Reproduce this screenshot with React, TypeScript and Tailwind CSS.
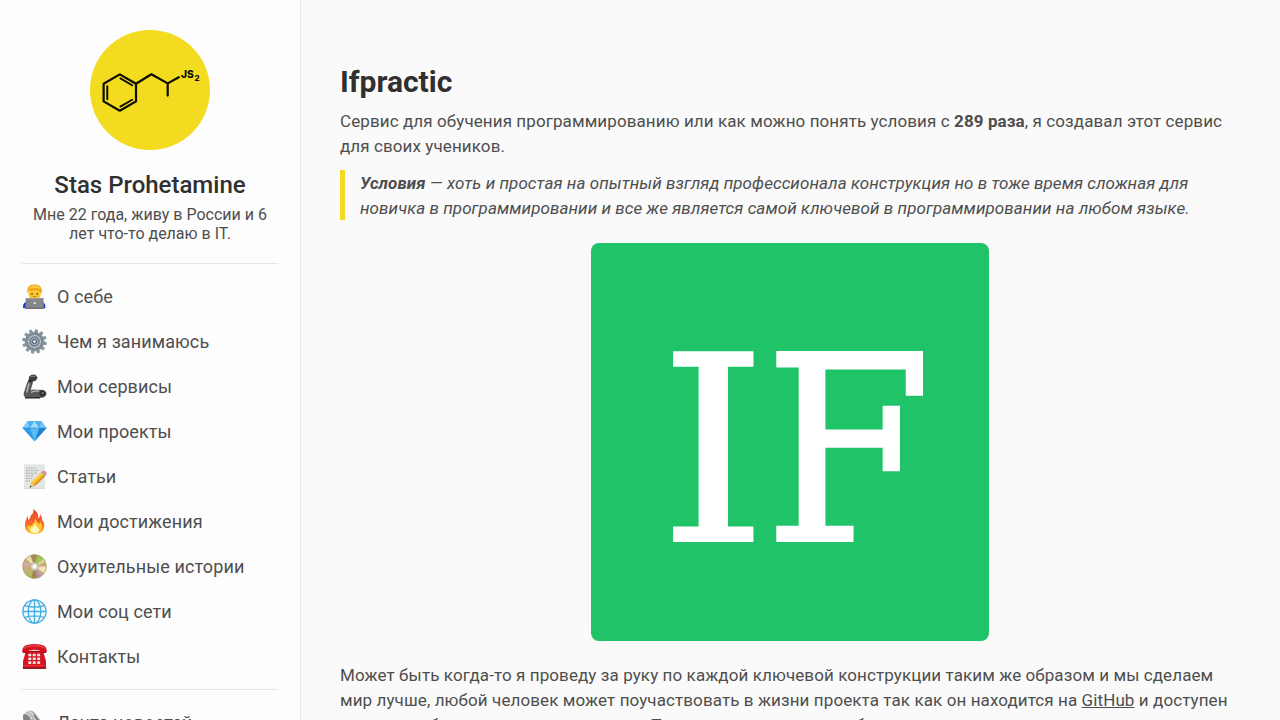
import type { ReactNode } from "react";

function Avatar() {
  return (
    <svg viewBox="0 0 120 120" className="h-[120px] w-[120px] shrink-0">
      <circle cx="60" cy="60" r="60" fill="#f3dc1f" />
      <g fill="none" stroke="#0c0b02" strokeWidth="2.2" strokeLinecap="round" strokeLinejoin="round">
        <path d="M29.8 44.4 46 53.8V71.4L29.8 80.7 13.6 71.4V53.8Z" />
        <path d="M17.3 56.2V69.2M30.4 48.4 42.2 55.2M30.4 76.6 42.2 69.8" strokeWidth="1.9" />
        <path d="M46 53.8 61.4 44.3 77.7 53.4 88.8 47.2M77.7 53.4V65.6" />
      </g>
      <text x="91" y="48.2" fontSize="10.2" fontWeight="800" fill="#0c0b02" className="font-['Inter',sans-serif]">JS</text>
      <text x="104.5" y="51.2" fontSize="8" fontWeight="800" fill="#0c0b02" className="font-['Inter',sans-serif]">2</text>
    </svg>
  );
}

function Icon({ children }: { children: ReactNode }) {
  return (
    <svg viewBox="0 0 25 25" className="h-[25px] w-[25px] shrink-0">
      {children}
    </svg>
  );
}

function Technologist() {
  return (
    <Icon>
      <path d="M1 24V21.5Q1.500 18.500 5 17.500H19Q23 18.500 23.300 21.500V24Z" fill="#2637d8" />
      <ellipse cx="12.600" cy="9.500" rx="6.300" ry="7" fill="#fbc72e" />
      <path d="M5.600 9.500Q4 1 11.500.6 20-.4 19.900 8L18.900 9.500Q17.500 6.200 15 6 10 7.500 7 6Z" fill="#eda61c" />
      <path d="M6.500 5Q9 .8 13 1.500 17 1.500 18.800 5.500 15 2.800 6.500 5Z" fill="#ffcd45" />
      <circle cx="10" cy="9.800" r=".9" fill="#6b4410" />
      <circle cx="15.200" cy="9.800" r=".9" fill="#6b4410" />
      <path d="M10.800 12.600H14.400" stroke="#a86a12" strokeWidth=".8" />
      <rect x="3.600" y="14" width="18" height="10.500" rx=".8" fill="#85888b" />
      <path d="M4 14.400H21.300" stroke="#a5a8aa" strokeWidth=".7" />
      <path d="M3 24.300H22.300" stroke="#5b5e61" />
      <circle cx="12.700" cy="19.200" r="1.100" fill="#eceeef" />
    </Icon>
  );
}

const teeth = [0, 30, 60, 90, 120, 150, 180, 210, 240, 270, 300, 330];

function Gear() {
  return (
    <Icon>
      {teeth.map((a) => (
        <path key={a} d="M10.500 4 11 .2H13.900L14.500 4Z" fill="#8a979f" transform={`rotate(${a + 10} 12.500 12.500)`} />
      ))}
      <circle cx="12.500" cy="12.500" r="9.600" fill="#82909a" />
      <circle cx="12.500" cy="12.500" r="7.300" fill="#a6b6c3" stroke="#66747f" strokeWidth=".8" />
      <path d="M12.500 5.500V19.500M5.500 12.500H19.500" stroke="#c4d0d9" />
      <circle cx="12.500" cy="12.500" r="4.600" fill="#98a4af" stroke="#5d6973" />
      <circle cx="12.500" cy="12.500" r="2" fill="#e4eaee" stroke="#424c55" />
    </Icon>
  );
}

function MechanicalArm() {
  return (
    <Icon>
      <path d="M7.200 2.500Q10-.4 13.600 1L15.600 3.800 14 6.500 10.500 7.700 6.500 7Z" fill="#3c3e40" />
      <path d="M9 2.700Q11 1 13 3" stroke="#8e9193" fill="none" />
      <path d="M5.300 8 11 8.500 8.200 17.500 11 23.500H4Q1 22.500 1.800 19Z" fill="#55585a" />
      <path d="M7 9.500 4.500 19.500" stroke="#b6b8ba" strokeWidth="1.500" />
      <path d="M6 7 10.500 8" stroke="#1d1f20" strokeWidth="1.600" />
      <path d="M3 20Q8 14.500 15 15.800H21Q25 17.500 24.500 20.500 22.500 24.500 17 24H3.500Z" fill="#595c5e" />
      <path d="M9 18.500Q13 16 17 17.300" stroke="#b6b8b9" strokeWidth="1.400" fill="none" />
      <path d="M3 23.800H18" stroke="#26282a" strokeWidth="1.400" />
      <circle cx="20.300" cy="19.600" r="3" fill="#2c2e30" />
      <circle cx="20.600" cy="19.200" r="1.100" fill="#77797b" />
    </Icon>
  );
}

function Gem() {
  return (
    <Icon>
      <path d="M5.500 2.300H19.500L24.500 9 12.600 22.300.6 9Z" fill="#38a4ed" />
      <path d="M5.500 2.300 7.800 9H.6Z" fill="#83cdf8" />
      <path d="M5.500 2.300H12.500L7.800 9Z" fill="#4bb4f2" />
      <path d="M12.500 2.300 17.500 9H7.800Z" fill="#a5defc" />
      <path d="M12.500 2.300H19.500L17.500 9Z" fill="#4db2f2" />
      <path d="M19.500 2.300 24.500 9H17.500Z" fill="#78c7f7" />
      <path d="M7.800 9H17.500L12.600 22.300Z" fill="#57bdf7" />
      <path d="M.6 9H7.800L12.600 22.300Z" fill="#319ce6" />
      <path d="M17.500 9H24.500L12.600 22.300Z" fill="#1e83d4" />
      <path d="M.6 9H24.500" stroke="#2788d0" strokeWidth=".6" />
    </Icon>
  );
}

function Memo() {
  return (
    <Icon>
      <rect x="2" y=".3" width="21" height="24.400" fill="#e4e5e5" />
      <path d="M2 24.400H23" stroke="#c6c7c7" strokeWidth=".6" />
      <g stroke="#999b9c" strokeWidth=".8" strokeDasharray="2.200 .7 1.200 .6">
        <path d="M4 4H14M4 6.600H17M4 9.200H15M4 11.800H12M4 14.400H10M4 17H8" />
      </g>
      <path d="M9.300 18 20 7.500 23.800 11.200 13 21.800 7.800 23.500Z" fill="#f4b925" />
      <path d="M10.400 18.500 20.700 8.500" stroke="#ffdc62" strokeWidth="1.300" />
      <path d="M12.700 21.300 23 11.200" stroke="#cf8511" strokeWidth="1.200" />
      <path d="M9.300 18 13 21.800 7.800 23.500Z" fill="#e7c38d" />
      <path d="M8.500 21.600 9.700 22.900 7.600 23.600Z" fill="#343434" />
      <path d="M18.700 8.800 20 7.500 23.900 11.200 22.500 12.500Z" fill="#a9b0b3" />
      <path d="M20 7.500 21 6.700Q23.500 6.300 24.800 9 24.800 10.500 23.900 11.300Z" fill="#ee8790" />
    </Icon>
  );
}

function Fire() {
  return (
    <Icon>
      <defs>
        <linearGradient id="flame" x1="0" x2="0" y1="0" y2="1">
          <stop offset="0" stopColor="#ed4927" />
          <stop offset=".55" stopColor="#f6652b" />
          <stop offset="1" stopColor="#ffb22d" />
        </linearGradient>
      </defs>
      <path d="M11.200.1Q16.600 3 16.300 9.200 18.300 8.500 18 5 20.500 8 20.300 11.300 22.800 14 22.300 17.500 21.200 24.900 12.700 24.900 4 24.900 2.900 17.500 2.300 13 4.400 10.200L5.300 6.800Q6.300 9.200 6.100 11.200 8.500 9.800 8.700 6.500 12.200 4.500 11.200.1Z" fill="url(#flame)" />
      <path d="M13.300 9.800Q14.700 13.300 17.300 15 18.300 14.300 18.500 12.800 21 17.300 19 20.600 17.500 24.500 12.500 24.500 7.200 24.500 5.800 20.600 5 18 6.500 16 7.300 18 8.700 17 12.700 14.500 13.300 9.800Z" fill="#ffc72e" />
      <path d="M13 14.500Q13.500 17.500 16.300 18.700 18 21.500 15.800 23.500 12.500 25.300 9.300 23.300 7.200 20.500 9.500 18.500 12.500 17.500 13 14.500Z" fill="#fff7b8" />
    </Icon>
  );
}

function Disc() {
  return (
    <Icon>
      <circle cx="12.500" cy="12.500" r="12" fill="#c3ae77" />
      <path d="M12.500 12.500 3.500 4.500A12 12 0 0 1 8 1.400Z" fill="#e8dfb3" />
      <path d="M12.500 12.500 9 1A12 12 0 0 1 15.500 .9Z" fill="#a88b55" />
      <path d="M12.500 12.500 16 1A12 12 0 0 1 21.500 4.700Z" fill="#9cc94f" />
      <path d="M12.500 12.500 21.500 4.700A12 12 0 0 1 23.500 8Z" fill="#dcd29a" />
      <path d="M12.500 12.500 24.500 12.500A12 12 0 0 1 22.500 19.200Z" fill="#f0e3bd" />
      <path d="M12.500 12.500 19.500 22.200A12 12 0 0 1 15.500 24.100Z" fill="#b98bc2" />
      <path d="M12.500 12.500 15.500 24.100A12 12 0 0 1 9 24Z" fill="#a38750" />
      <path d="M12.500 12.500 8 23.600A12 12 0 0 1 3.800 20.600Z" fill="#b6bb5f" />
      <path d="M12.500 12.500 .5 12.500A12 12 0 0 1 1.700 7.500Z" fill="#d0a9a8" />
      <circle cx="12.500" cy="12.500" r="11.700" fill="none" stroke="#a89972" strokeWidth=".6" />
      <circle cx="12.500" cy="12.500" r="3.900" fill="#d9d4c4" stroke="#aca181" strokeWidth=".6" />
      <circle cx="12.500" cy="12.500" r="1.900" fill="#fff" />
    </Icon>
  );
}

function Globe() {
  return (
    <Icon>
      <circle cx="12.500" cy="12.500" r="11.600" fill="#eef9fe" />
      <g fill="none" stroke="#45ade0" strokeWidth="1.300">
        <circle cx="12.500" cy="12.500" r="11.600" />
        <ellipse cx="12.500" cy="12.500" rx="6.300" ry="11.600" />
        <path d="M12.500 1V24M1 12.500H24M3 6.700Q12.500 9.700 22 6.700M3 18.300Q12.500 15.300 22 18.300" />
      </g>
    </Icon>
  );
}

const keyRows = [10.2, 14, 17.8];
const keyCols = [6.7, 11.1, 15.5];

function Telephone() {
  return (
    <Icon>
      <path d="M4 7H21L24 17V24.500H1V17Z" fill="#d6141f" />
      <path d="M.2 7.500Q.2 2 5 1 12.500-.8 20 1 24.900 2 24.800 7.500 24.600 8.900 22.800 8.900H19Q18 8.500 18 6.500 12.500 5 7 6.500 7 8.500 6 8.900H2Q.4 8.900.2 7.500Z" fill="#d51320" />
      <path d="M2 4.500Q5 1.700 12.500 1.800 20 1.700 23 4.500" fill="none" stroke="#f35d5d" strokeWidth=".9" />
      <path d="M1 8.400H6M19 8.400H24M7 7.300H18" stroke="#8d0d15" strokeWidth=".9" />
      <path d="M1.500 21.700H23.500" stroke="#ef4a4c" strokeWidth=".7" />
      <path d="M.8 24.200H24.200" stroke="#7e0c13" strokeWidth="1.300" />
      {keyRows.map((y) =>
        keyCols.map((x) => <rect key={`${x}-${y}`} x={x - 0.4} y={y - 0.5} width="3" height="2.600" rx=".4" fill="#f4e5e3" />),
      )}
    </Icon>
  );
}

function Newspaper() {
  return (
    <Icon>
      <path d="M1 5 5 1Q10-.5 13 3L24 17 16 24 9 20 1 9Z" fill="#b1b0ad" />
      <path d="M1 5Q6 3 8 9L15 23 9 20 1 9Z" fill="#858481" />
      <path d="M5 1Q10 2 12 7L18 18M3 3Q8 4 10 9" stroke="#e1e0dd" strokeWidth="1.200" fill="none" />
      <path d="M12 5 17 12" stroke="#72716e" strokeWidth="1.500" />
    </Icon>
  );
}

const menu = [
  { label: "О себе", icon: <Technologist /> },
  { label: "Чем я занимаюсь", icon: <Gear /> },
  { label: "Мои сервисы", icon: <MechanicalArm /> },
  { label: "Мои проекты", icon: <Gem /> },
  { label: "Статьи", icon: <Memo /> },
  { label: "Мои достижения", icon: <Fire /> },
  { label: "Охуительные истории", icon: <Disc /> },
  { label: "Мои соц сети", icon: <Globe /> },
  { label: "Контакты", icon: <Telephone /> },
];

function MenuItem({ label, icon }: { label: string; icon: ReactNode }) {
  return (
    <a className="flex h-[45px] shrink-0 items-center gap-2.5 text-[18px] tracking-[0.1px] text-[#4e4e4e]">
      {icon}
      <span>{label}</span>
    </a>
  );
}

function Sidebar() {
  return (
    <aside className="flex w-[301px] shrink-0 flex-col border-r border-[#e6e6e6] bg-[#fdfdfd] px-[22px] pt-[30px]">
      <header className="flex shrink-0 flex-col items-center border-b border-[#e6e6e6] pb-5 text-center">
        <Avatar />
        <h2 className="mt-[21px] text-2xl leading-7 font-medium text-[#303030]">Stas Prohetamine</h2>
        <p className="mt-1.5 text-base leading-[19px] text-[#4e4e4e]">
          Мне 22 года, живу в России и 6<br />лет что-то делаю в IT.
        </p>
      </header>
      <nav className="flex shrink-0 flex-col border-b border-[#e6e6e6] py-2.5">
        {menu.map((item) => (
          <MenuItem key={item.label} {...item} />
        ))}
      </nav>
      <nav className="flex flex-col pt-2.5">
        <MenuItem label="Лента новостей" icon={<Newspaper />} />
      </nav>
    </aside>
  );
}

function Cover() {
  return (
    <svg viewBox="0 0 398 398" className="mt-[23px] h-[398px] w-[398px] shrink-0 self-center rounded-lg bg-[#21c369] shadow-[0_0_20px_rgba(0,0,0,0.01)]">
      <g fill="#fff" stroke="#fff" className="font-['DejaVu_Serif',serif]">
        <text transform="translate(68 298) scale(1.061 1)" fontSize="259" strokeWidth="2">I</text>
        <text transform="translate(173.400 297.500) scale(.935 1)" fontSize="258" strokeWidth="3">F</text>
      </g>
    </svg>
  );
}

export default function App() {
  return (
    <div className="flex h-screen overflow-hidden bg-[#fafafa] font-['Roboto',sans-serif]">
      <Sidebar />
      <main className="flex min-w-0 flex-1 flex-col pt-16 pr-10 pl-[39px] text-[17px] leading-[25px] tracking-[0.095px] text-[#4e4e4e]">
        <h1 className="text-[30px] leading-[35px] font-bold tracking-normal text-[#303030]">Ifpractic</h1>
        <p className="mt-2.5 whitespace-nowrap">
          Сервис для обучения программированию или как можно понять условия с <b>289 раза</b>, я создавал этот сервис
          <br />
          для своих учеников.
        </p>
        <blockquote className="mt-[11px] h-[50px] border-l-[5px] border-[#f3dc1f] pt-px pl-[15px] tracking-[0.07px] whitespace-nowrap italic">
          <b>Условия</b> — хоть и простая на опытный взгляд профессионала конструкция но в тоже время сложная для
          <br />
          новичка в программировании и все же является самой ключевой в программировании на любом языке.
        </blockquote>
        <Cover />
        <p className="mt-[22px] whitespace-nowrap">
          Может быть когда-то я проведу за руку по каждой ключевой конструкции таким же образом и мы сделаем
          <br />
          мир лучше, любой человек может поучаствовать в жизни проекта так как он находится на{" "}
          <a className="underline">GitHub</a> и доступен
          <br />
          каждому, обучаемся сначала и снова. Также сервис можно пробовать на практике
        </p>
      </main>
    </div>
  );
}
